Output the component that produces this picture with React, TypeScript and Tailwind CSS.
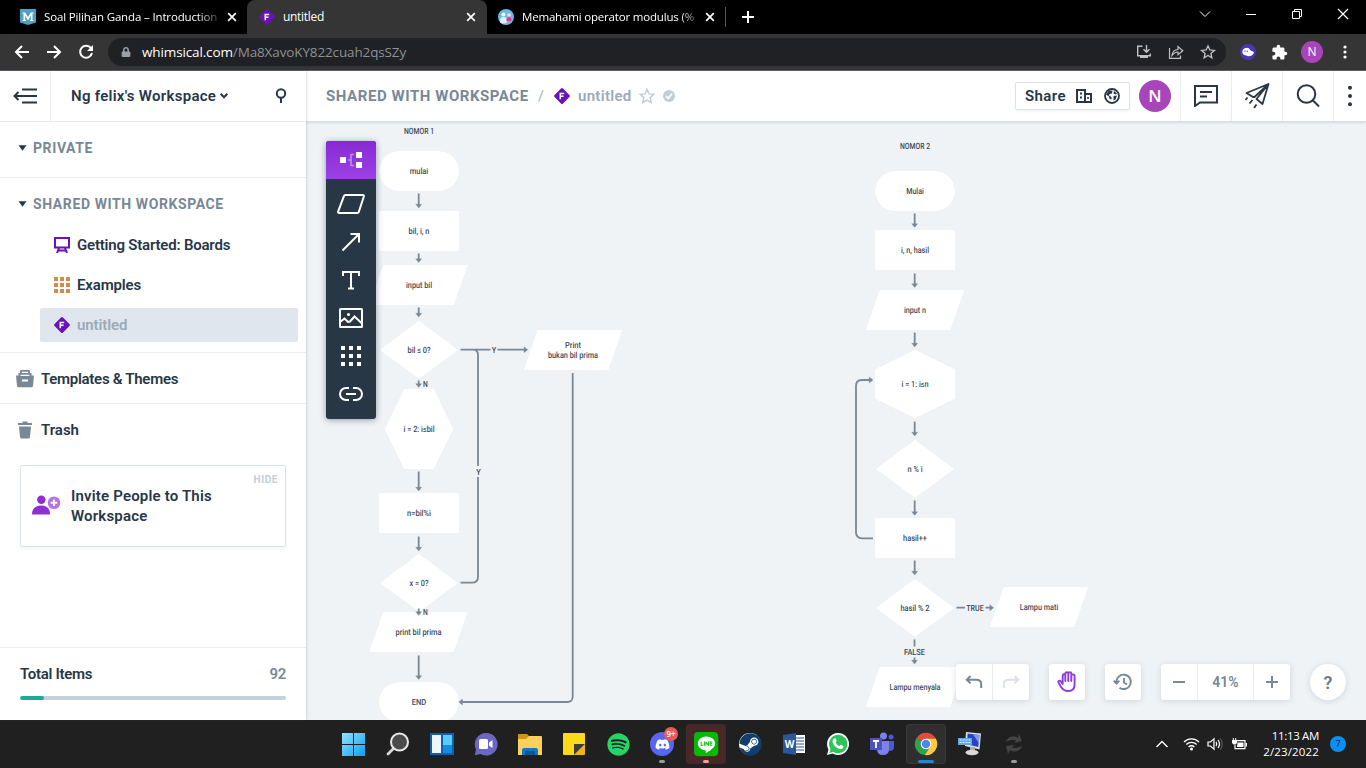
import React from "react";
import { FaSpotify, FaDiscord, FaSteam, FaLine, FaLock } from "react-icons/fa";
import { MdExtension } from "react-icons/md";

type IconProps = { className?: string; children: React.ReactNode; w?: number; h?: number };

/* Stroked drawing whose user units equal CSS pixels. */
const Ico = ({ className = "", children, w = 24, h = 24 }: IconProps) => (
  <svg
    width={w}
    height={h}
    viewBox={`0 0 ${w} ${h}`}
    fill="none"
    stroke="currentColor"
    strokeWidth={2}
    className={`block shrink-0 ${className}`}
  >
    {children}
  </svg>
);

const CloseX = () => (
  <Ico w={10} h={10} className="text-white">
    <path d="M1.2 1.2 8.8 8.8M8.8 1.2 1.2 8.8" strokeWidth={1.7} />
  </Ico>
);

const FlowMark = () => (
  <svg width={16} height={16} viewBox="0 0 16 16" className="block shrink-0">
    <path d="M7 .6a1.4 1.4 0 0 1 2 0L15.4 7a1.4 1.4 0 0 1 0 2L9 15.4a1.4 1.4 0 0 1-2 0L.6 9a1.4 1.4 0 0 1 0-2Z" fill="#6a11b8" />
    <path d="M6.3 11.3V5.4h3.9M6.3 8.3h3.2" stroke="#fff" strokeWidth={1.5} fill="none" />
  </svg>
);

const Avatar = ({ className }: { className: string }) => (
  <div className={`flex shrink-0 items-center justify-center rounded-full bg-[#a846b9] text-white ${className}`}>N</div>
);

function BrowserBar() {
  return (
    <div className="h-[71px] shrink-0 bg-black font-['Open_Sans',sans-serif] text-white">
      <div className="flex h-[34px] items-stretch text-[12px]">
        <div className="flex w-[247px] items-center rounded-br-lg bg-black pl-5">
          <svg width={16} height={16} viewBox="0 0 16 16" className="block shrink-0">
            <path d="M0 0h16v13.500L8 16l-8-2.500Z" fill="#4d9fc4" />
            <path d="M2.500 3.500h2.700L8 8.300l2.800-4.800h2.700v1h-1v6.500h1v1h-3.500v-1h.8V6.500L8.300 11h-.7L5.200 6.500V11H6v1H2.500v-1h1V4.500h-1Z" fill="#fff" />
          </svg>
          <div className="ml-2 w-[174px] shrink-0 whitespace-nowrap text-[11.5px] tracking-[-0.15px] [mask-image:linear-gradient(90deg,#000_88%,rgba(0,0,0,0.2))]">
            Soal Pilihan Ganda – Introduction
          </div>
          <div className="ml-[9px]">
            <CloseX />
          </div>
        </div>
        <div className="flex w-[240px] items-center rounded-t-lg bg-[#353535] pl-3">
          <FlowMark />
          <div className="ml-2 w-[183px] tracking-[-0.3px]">untitled</div>
          <CloseX />
        </div>
        <div className="flex w-[239px] items-center rounded-bl-lg bg-black pl-[11px]">
          <svg width={16} height={16} viewBox="0 0 16 16" className="block shrink-0">
            <circle cx={8} cy={8} r={8} fill="#6db9e4" />
            <path d="M2 13c0-4 1-5 3.500-5S9 9 9 13c-2 2-5 2-7 0Z" fill="#dff1fb" />
            <circle cx={5.500} cy={5.500} r={2} fill="#fff" />
            <circle cx={11} cy={6} r={1.800} fill="#fbd8c9" />
            <path d="M8.500 12c0-3 1-4 2.500-4s2.500 1 2.500 4Z" fill="#dc3b8c" />
          </svg>
          <div className="ml-2 w-[175px] shrink-0 whitespace-nowrap text-[11.5px] tracking-[-0.18px] [mask-image:linear-gradient(90deg,#000_90%,rgba(0,0,0,0.3))]">
            Memahami operator modulus (%
          </div>
          <div className="ml-2">
            <CloseX />
          </div>
          <div className="ml-[10px] h-5 w-px shrink-0 bg-[#555]" />
        </div>
        <div className="flex w-[43px] items-center justify-center">
          <Ico w={12} h={12}>
            <path d="M6 0v12M0 6h12" />
          </Ico>
        </div>
        <div className="ml-auto flex h-7 items-center">
          <Ico w={46} h={12}>
            <path d="M18 3.500l5 5 5-5" strokeWidth={1} />
          </Ico>
          <Ico w={46} h={12}>
            <path d="M18 6.500h10" strokeWidth={1} />
          </Ico>
          <Ico w={46} h={12}>
            <path d="M18.500 3.500h7v7h-7ZM20.500 3.500v-2h7v7h-2" strokeWidth={1} />
          </Ico>
          <Ico w={46} h={12}>
            <path d="M18 1l10 10M28 1 18 11" strokeWidth={1.200} />
          </Ico>
        </div>
      </div>
      <div className="flex h-[37px] items-center border-b border-[#5e5e60] bg-[#353535]">
        <div className="flex w-[108px] items-center gap-[16px] pl-[14px]">
          <Ico w={16} h={16}>
            <path d="M15 8H2M8 2 2 8l6 6" />
          </Ico>
          <Ico w={16} h={16}>
            <path d="M1 8h13M8 2l6 6-6 6" />
          </Ico>
          <Ico w={16} h={16}>
            <path d="M13 4.200A6 6 0 1 0 14 9" />
            <path d="M15 1v6H9Z" fill="currentColor" stroke="none" />
          </Ico>
        </div>
        <div className="flex h-7 w-[1118px] items-center rounded-full bg-[#202124] pl-[13px] pr-[10px] text-[13.5px]">
          <FaLock className="text-[#9aa0a6]" size={10} />
          <div className="ml-[11px] whitespace-nowrap tracking-[-0.13px]">
            whimsical.com<span className="text-[#8d9196]">/Ma8XavoKY822cuah2qsSZy</span>
          </div>
          <div className="ml-auto flex gap-4 text-[#bfc2c5]">
            <Ico w={16} h={16}>
              <path d="M6.500 2.200H1.700v9.500H14.300V9.500M10.500 1v7M7.500 5.200l3 3 3-3" strokeWidth={1.400} />
              <path d="M4 11.500h8v2.500H4Z" fill="currentColor" stroke="none" />
            </Ico>
            <Ico w={16} h={16}>
              <path d="M1.500 4v10.300h11V11.500M4 11.300c.5-4 3-5.700 6-5.800V2.500l4.800 4.200L10 10.800V8C7.500 8 5.500 9.300 4 11.300Z" strokeWidth={1.200} />
            </Ico>
            <Ico w={16} h={16}>
              <path d="m8 1.800 1.800 4.200 4.600.4-3.500 3 1 4.500L8 11.500l-3.900 2.400 1-4.500-3.500-3 4.600-.4Z" strokeWidth={1.300} />
            </Ico>
          </div>
        </div>
        <svg width={16} height={16} viewBox="0 0 16 16" className="ml-[14px] block">
          <circle cx={8} cy={8} r={8} fill="#4a35b5" />
          <path d="M2.300 8a4.300 4.300 0 0 1 8-2c.8 1.300 2.200 1 3.600 2-.4 3-2.700 4.300-5.700 4.300-1.600 0-1.500-1-2.900-1S2.300 9.500 2.300 8Z" fill="#fff" />
          <path d="M5 6.500v1.700M7.300 6.500v1.700" stroke="#555" strokeWidth={0.900} />
        </svg>
        <MdExtension className="ml-[15px]" size={17} />
        <Avatar className="ml-[13px] size-[22px] text-[12px]" />
        <svg width={16} height={16} viewBox="0 0 16 16" fill="#fff" className="ml-[14px] block">
          <circle cx={8} cy={3} r={1.600} />
          <circle cx={8} cy={8} r={1.600} />
          <circle cx={8} cy={13} r={1.600} />
        </svg>
      </div>
    </div>
  );
}

const Section = ({ label }: { label: string }) => (
  <div className="flex items-center gap-[6px] pl-[18px] text-[14px] font-bold leading-5 tracking-[0.6px] text-[#788896]">
    <svg width={9} height={6} viewBox="0 0 9 6" className="block">
      <path d="M.5.300h8L4.500 5.700Z" fill="#273746" />
    </svg>
    <span>{label}</span>
  </div>
);

function Sidebar() {
  return (
    <aside className="z-10 flex w-[306px] shrink-0 flex-col bg-white shadow-[0_0_3px_rgba(40,60,80,0.3)]">
      <div className="flex h-[51px] shrink-0 items-center border-b border-[#e4e9ee]">
        <div className="flex h-full w-[51px] items-center justify-center border-r border-[#e9edf1]">
          <Ico w={24} h={16}>
            <path d="M9 1.500h15M1.500 8H24M9 14.500h15M5.500 4 1.500 8l4 4" />
          </Ico>
        </div>
        <div className="ml-5 w-[145px] whitespace-nowrap text-[15px] font-semibold tracking-[0.28px]">Ng felix's Workspace</div>
        <Ico w={8} h={6} className="ml-[4px]">
          <path d="m.7.700 3.300 3.500L7.300.700" />
        </Ico>
        <Ico w={12} h={16} className="ml-[47px]">
          <circle cx={6} cy={5.500} r={4.200} />
          <path d="M6 10v5" />
        </Ico>
      </div>
      <div className="flex h-14 items-center border-b border-[#e9edf1] pb-1">
        <Section label="PRIVATE" />
      </div>
      <div className="h-[175px] border-b border-[#e9edf1] pt-4">
        <Section label="SHARED WITH WORKSPACE" />
        <div className="ml-10 mt-[14px] flex w-[258px] flex-col gap-[6px] text-[15px] font-semibold">
          <div className="flex h-[34px] items-center gap-[7px] pl-[14px]">
            <Ico w={16} h={16} className="text-[#6a11b8]">
              <path d="M1 1h14v9.500H1ZM5 11l-2 5M11 11l2 5M4 13.500h8" />
            </Ico>
            <span className="tracking-[-0.2px]">Getting Started: Boards</span>
          </div>
          <div className="flex h-[34px] items-center gap-[7px] pl-[14px]">
            <svg width={16} height={16} viewBox="0 0 16 16" fill="#d58a4c" className="block">
              <path d="M0 0h4v4H0ZM6 0h4v4H6ZM12 0h4v4h-4ZM0 6h4v4H0ZM6 6h4v4H6ZM12 6h4v4h-4ZM0 12h4v4H0ZM6 12h4v4H6ZM12 12h4v4h-4Z" />
            </svg>
            <span className="tracking-[-0.15px]">Examples</span>
          </div>
          <div className="flex h-[34px] items-center gap-[7px] rounded-[2px] bg-[#dfe6ee] pl-[14px] text-[#9caab7]">
            <FlowMark />
            <span className="tracking-[-0.1px]">untitled</span>
          </div>
        </div>
      </div>
      <div className="flex h-[51px] items-center gap-[7px] border-b border-[#e9edf1] pl-4 pt-0.5 text-[15px] font-semibold">
        <svg width={18} height={18} viewBox="0 0 18 18" fill="#788896" className="block">
          <path d="M5 0h8a1 1 0 0 1 1 1V3h1.500v2.500H18L17 16a1.500 1.500 0 0 1-1.500 1.300h-13A1.500 1.500 0 0 1 1 16L0 5.500h2.500V3H4V1a1 1 0 0 1 1-1Z" />
          <path d="M5.800 1.700h6.400v1.200H5.800ZM4.500 4.700h9v1.200h-9ZM6 9.500h6v2H6Z" fill="#fff" />
        </svg>
        <span className="tracking-[-0.28px]">Templates &amp; Themes</span>
      </div>
      <div className="flex h-[52px] items-center gap-[9px] pl-[18px] text-[15px] font-semibold">
        <svg width={14} height={18} viewBox="0 0 14 18" fill="#788896" className="block">
          <path d="M4.500.5h5V2H14v2H0V2h4.500ZM1 5.500h12L12 16a1.800 1.800 0 0 1-1.800 1.600H3.800A1.800 1.800 0 0 1 2 16Z" />
        </svg>
        <span>Trash</span>
      </div>
      <div className="mx-5 mt-[9px] flex h-[82px] items-start rounded-[2px] border border-[#dbe3ea] shadow-[0_2px_4px_rgba(40,60,80,0.06)]">
        <svg width={29} height={20} viewBox="0 0 29 20" className="ml-[11px] mt-[29px] block shrink-0">
          <circle cx={9.300} cy={4.800} r={4.200} fill="#8e2fd6" />
          <path d="M0 19.500c0-6 3.500-9 9.200-9s8.800 3 8.800 9Z" fill="#8e2fd6" />
          <circle cx={22} cy={7.800} r={6.300} fill="#b573e4" />
          <path d="M22 4.500v6.600M18.700 7.800h6.600" stroke="#fff" strokeWidth={2} />
        </svg>
        <div className="ml-[10px] mt-5 text-[15px] font-semibold leading-5 tracking-[0.18px]">
          Invite People to This
          <br />
          Workspace
        </div>
        <div className="ml-auto mr-[7px] mt-[7px] text-[10px] font-bold leading-[14px] tracking-[0.6px] text-[#c3cdd6]">HIDE</div>
      </div>
      <div className="mt-auto h-[73px] border-t border-[#e9edf1] px-5 pt-4">
        <div className="flex justify-between text-[15px] font-semibold leading-5">
          <span className="tracking-[-0.3px]">Total Items</span>
          <span className="tracking-[-0.3px] text-[#788896]">92</span>
        </div>
        <div className="mt-3 h-1 overflow-hidden rounded-full bg-[#c5d0da]">
          <div className="h-full w-6 rounded-full bg-[#1aac97]" />
        </div>
      </div>
    </aside>
  );
}

const HeadCell = ({ children, className = "w-[51px]" }: { children: React.ReactNode; className?: string }) => (
  <div className={`flex h-full items-center justify-center border-l border-[#e9edf1] ${className}`}>{children}</div>
);

function Header() {
  return (
    <header className="z-[5] flex h-[51px] shrink-0 items-center border-b border-[#d8dfe5] bg-white pl-5 text-[15px] font-semibold shadow-[0_1px_2px_rgba(40,60,80,0.12)]">
      <span className="w-[204px] whitespace-nowrap font-bold tracking-[0.56px] text-[#788896]">SHARED WITH WORKSPACE</span>
      <span className="w-6 pl-2 font-medium text-[#b3bec8]">/</span>
      <FlowMark />
      <span className="ml-2 w-[54px] tracking-[0.3px] text-[#9caab7]">untitled</span>
      <Ico w={16} h={16} className="ml-[7px] text-[#c3cdd6]">
        <path d="m8 1.500 2 4.400 4.800.5-3.600 3.200 1 4.800L8 12l-4.200 2.400 1-4.800L1.200 6.400 6 5.900Z" strokeWidth={1.500} />
      </Ico>
      <svg width={12} height={12} viewBox="0 0 12 12" className="ml-2 block">
        <circle cx={6} cy={6} r={6} fill="#c3cdd6" />
        <path d="m3 6.200 2.200 2.200L9 3.800" stroke="#fff" strokeWidth={1.700} fill="none" />
      </svg>
      <div className="ml-auto flex h-7 w-[115px] items-center rounded-[2px] border border-[#dbe3ea] pl-[9px] shadow-[0_2px_3px_rgba(40,60,80,0.05)]">
        <span className="w-[42px] tracking-[0.4px]">Share</span>
        <Ico w={16} h={14} className="ml-[9px]">
          <path d="M1 1h8v12H1ZM9 5h6v8H9" />
          <path d="M4 4.500h2M4 8.500h2M11.200 9h1.600" strokeWidth={2} />
        </Ico>
        <Ico w={16} h={16} className="ml-3">
          <circle cx={8} cy={8} r={7} strokeWidth={1.800} />
          <path d="M2 6.500 5 2.500l3.500.3L8 5.500 5.500 6 5 7.500 7.500 9v2.500L5.500 11 5 8.500ZM10 3l3 2.500-1.500 1-2-1ZM9.500 8l3.500-.5-1.500 4-2 1Z" fill="currentColor" stroke="none" />
        </Ico>
      </div>
      <Avatar className="ml-[9px] mr-[9px] size-8 font-['Open_Sans',sans-serif] text-[17px] font-semibold" />
      <HeadCell>
        <Ico w={24} h={22}>
          <path d="M1 1h22v16.500H6L1 21Z" />
          <path d="M6 7h12M6 11.500h7" />
        </Ico>
      </HeadCell>
      <HeadCell>
        <Ico w={26} h={26}>
          <path d="M24.500 1 2.500 10l6.500 4 1.500 0L24.500 1 12.500 16l6 5Z" strokeWidth={1.800} strokeLinejoin="round" />
          <path d="M3.500 14.500 1.500 17M8.500 17l-3 3.500M12.500 21.500l-2.500 3.500" strokeWidth={1.800} />
        </Ico>
      </HeadCell>
      <HeadCell>
        <Ico w={24} h={24}>
          <circle cx={10.500} cy={10} r={8.800} />
          <path d="m17 16.500 6 6" />
        </Ico>
      </HeadCell>
      <HeadCell className="w-[33px]">
        <svg width={6} height={22} viewBox="0 0 6 22" fill="#273746">
          <circle cx={3} cy={2.800} r={2} />
          <circle cx={3} cy={11} r={2} />
          <circle cx={3} cy={19.200} r={2} />
        </svg>
      </HeadCell>
    </header>
  );
}

type Label = [text: string, x: number, y: number, width: number];

const labels: Label[] = [
  ["NOMOR 1", 419, 131, 30],
  ["mulai", 419, 171, 18.5],
  ["bil, i, n", 419, 231, 21],
  ["input bil", 419, 285, 26],
  ["bil ≤ 0?", 419, 350, 23],
  ["Y", 494, 350, 4.5],
  ["N", 425.5, 384, 4.800],
  ["Print", 573, 345, 16],
  ["bukan bil prima", 573, 355, 50],
  ["i = 2: i≤bil", 419, 429, 31],
  ["Y", 478.500, 472, 4.500],
  ["n=bil%i", 419, 513, 24],
  ["x = 0?", 419, 583, 19],
  ["N", 425.500, 612, 4.800],
  ["print bil prima", 418.500, 632, 46],
  ["END", 419, 702, 14.500],
  ["NOMOR 2", 915, 146, 30],
  ["Mulai", 915, 191, 17.500],
  ["i, n, hasil", 915, 250, 28],
  ["input n", 915, 310, 22],
  ["i = 1: i≤n", 915, 384, 27],
  ["n % i", 915, 469, 15],
  ["hasil++", 915, 538, 24],
  ["hasil % 2", 915, 608, 29],
  ["TRUE", 975, 608, 17.500],
  ["Lampu mati", 1039, 607, 38.500],
  ["FALSE", 914.500, 652, 21],
  ["Lampu menyala", 915, 687, 51],
];

const downArrows: [x: number, from: number, to: number][] = [
  [418.700, 193.500, 208], [418.700, 253.500, 262.500], [418.700, 307.500, 317], [418.700, 380.500, 387.500],
  [418.700, 471.500, 491], [418.700, 536.500, 551], [418.700, 608.500, 615.500], [418.700, 655.500, 679.500],
  [914.700, 213.500, 227.500], [914.700, 273.500, 287.500], [914.700, 332.500, 347], [914.700, 421.500, 436],
  [914.700, 500.500, 515.500], [914.700, 560.500, 575], [914.500, 657.500, 664],
];

const para = (x: number, y: number) => `M${x + 14} ${y}h85l-14 40h-85Z`;
const diamond = (x: number, y: number) => `M${x} ${y - 29.500}l39.500 29.500-39.500 29-39.500-29Z`;

function Diagram() {
  return (
    <svg width={1059} height={598} viewBox="307 122 1059 598" className="block">
      <g fill="#fff" style={{ filter: "drop-shadow(0 0 0.7px rgba(40,60,80,.12))" }}>
        <rect x={379} y={151} width={80} height={40} rx={20} />
        <rect x={379} y={211} width={80} height={40} rx={1} />
        <path d={para(369, 265)} />
        <path d={diamond(419, 350)} />
        <path d={para(523.500, 330)} />
        <path d="M404 389h30l19.500 40-19.500 40h-30l-19.500-40Z" />
        <rect x={379} y={493} width={80} height={40} rx={1} />
        <path d={diamond(419, 583)} />
        <path d={para(369, 612)} />
        <rect x={379} y={682} width={80} height={40} rx={20} />
        <rect x={875} y={171} width={80} height={40} rx={20} />
        <rect x={875} y={230} width={80} height={40} rx={1} />
        <path d={para(865.500, 290)} />
        <path d="M915 349.500l40 19.500v30l-40 19.500-40-19.500v-30Z" />
        <path d={diamond(915, 469)} />
        <rect x={875} y={518} width={80} height={40} rx={1} />
        <path d={diamond(915, 608)} />
        <path d={para(989.500, 587)} />
        <path d={para(865.500, 667)} />
      </g>
      <g stroke="#788896" strokeWidth={1.800} fill="none">
        {downArrows.map(([x, a, b]) => (
          <g key={`${x}-${a}`}>
            <path d={`M${x} ${a}V${b - 1.500}`} />
            <path d={`M${x - 3} ${b - 3.800}h6L${x} ${b}Z`} fill="#788896" strokeWidth={0.300} />
          </g>
        ))}
        <path d="M460.500 349.700H490.500M497.500 349.700h28M478 466V355q0-5-5-5.300M478 477v99.700q0 6-6 6h-11.500" />
        <path d="M572.700 373v323.500q0 5.500-5.500 5.500H461M873 538.300h-11q-6 0-6-6V386q0-6 6-6h9M956.500 607.700h8.500M985.500 607.700h7M914.500 639.500v7" />
        <g fill="#788896" strokeWidth={0.300}>
          <path d="M524 346.700v6l3.800-3ZM462.500 699v6l-3.800-3ZM869.200 377v6l3.800-3ZM989.800 604.700v6l3.800-3Z" />
        </g>
      </g>
      <g className="font-['Roboto',sans-serif] text-[8.6px] font-medium" fill="#3c4a57" textAnchor="middle" textRendering="geometricPrecision">
        {labels.map(([t, x, y, w]) => (
          <text key={`${t}-${x}-${y}`} x={x} y={y + 2.800} textLength={w} lengthAdjust="spacingAndGlyphs">
            {t}
          </text>
        ))}
      </g>
    </svg>
  );
}

const Tool = ({ children }: { children: React.ReactNode }) => (
  <div className="flex h-[38px] items-center justify-center">{children}</div>
);

function ToolPalette() {
  return (
    <div className="absolute left-5 top-[19px] w-[50px] overflow-hidden rounded-[3px] bg-[#273746] pb-[6px] text-white shadow-[0_1px_6px_rgba(30,45,60,0.45)]">
      <div className="mb-[6px] flex h-[38px] items-center justify-center bg-linear-to-b from-[#8729d3] to-[#9c41e5]">
        <svg width={24} height={18} viewBox="0 0 24 18" className="block">
          <path d="M1 6h6v6H1ZM17 1h6v6h-6ZM17 11h6v6h-6Z" fill="#fff" />
          <path d="M9 9h3M15 3.500h-3v11h3" stroke="#c18bee" strokeWidth={1.600} fill="none" />
        </svg>
      </div>
      <Tool>
        <Ico w={28} h={22}>
          <path d="M8.500 2H26a1 1 0 0 1 .9 1.200l-5.200 16a1.300 1.300 0 0 1-1.200.8H2a1 1 0 0 1-.9-1.300l5.800-15.600A1.600 1.600 0 0 1 8.500 2Z" />
        </Ico>
      </Tool>
      <Tool>
        <Ico w={20} h={20}>
          <path d="M1.500 18.500 18 2M9.500 2H18v8.500" />
        </Ico>
      </Tool>
      <Tool>
        <Ico w={20} h={20}>
          <path d="M2 6V2h16v4M10 2v16.500M7 18.500h6" />
        </Ico>
      </Tool>
      <Tool>
        <Ico w={24} h={20}>
          <rect x={1} y={1} width={22} height={18} rx={0.5} />
          <path d="m1 14 4.500-3.500 3.500 3.500 2-.5 4.500-5L23 15.500" />
          <circle cx={9.500} cy={6.500} r={1.500} fill="currentColor" stroke="none" />
        </Ico>
      </Tool>
      <Tool>
        <svg width={20} height={20} viewBox="0 0 20 20" fill="#fff">
          <path d="M0 0h4v4H0ZM8 0h4v4H8ZM16 0h4v4h-4ZM0 8h4v4H0ZM8 8h4v4H8ZM16 8h4v4h-4ZM0 16h4v4H0ZM8 16h4v4H8ZM16 16h4v4h-4Z" />
        </svg>
      </Tool>
      <Tool>
        <Ico w={24} h={14}>
          <path d="M10 1H7a6 6 0 0 0 0 12h3M14 1h3a6 6 0 0 1 0 12h-3M7 7h10" />
        </Ico>
      </Tool>
    </div>
  );
}

const controlBox = "flex h-9 items-center rounded-[3px] bg-white shadow-[0_1px_6px_rgba(40,60,80,0.16)]";

function Controls() {
  return (
    <div className="absolute bottom-5 right-5 flex gap-5 text-[#788896]">
      <div className={controlBox}>
        <div className="flex h-full w-[37px] items-center justify-center border-r border-[#e9edf1]">
          <Ico w={18} h={14}>
            <path d="M5.500 1 1.800 4.700l3.700 3.700M2 4.700h9.500q4.700 0 4.700 4.500V13" />
          </Ico>
        </div>
        <div className="flex h-full w-9 items-center justify-center text-[#dce1e6]">
          <Ico w={18} h={14}>
            <path d="m12.500 1 3.700 3.700-3.700 3.700M16 4.700H6.500Q1.800 4.700 1.800 9.200V13" />
          </Ico>
        </div>
      </div>
      <div className={`${controlBox} w-9 justify-center text-[#8e3bd8]`}>
        <Ico w={20} h={22}>
          <path
            d="M5.700 12V4.500a1.300 1.300 0 0 1 2.600 0V10 2.800a1.500 1.500 0 0 1 3 0V10 2.800a1.500 1.500 0 0 1 3 0V10 5a1.500 1.500 0 0 1 3.300 0v8.500c0 4.500-2.500 6.500-6.500 6.500-3.500 0-5.300-1.300-7-4L1.500 11.500C1 10 2.500 9 3.700 10.200L5.700 13Z"
            strokeWidth={1.900}
            strokeLinejoin="round"
          />
        </Ico>
      </div>
      <div className={`${controlBox} w-9 justify-center`}>
        <Ico w={20} h={18}>
          <path d="M3.500 9.500A7.200 7.200 0 1 1 6.500 14.700M.7 7.700 3.500 10.700l2.800-3M11 5v4.500l3 2" strokeWidth={1.900} />
        </Ico>
      </div>
      <div className={`${controlBox} w-[129px]`}>
        <div className="flex w-9 justify-center">
          <Ico w={12} h={12}>
            <path d="M0 6h12" />
          </Ico>
        </div>
        <div className="flex h-full w-[57px] items-center justify-center border-x border-[#e9edf1] text-[14px] font-semibold">41%</div>
        <div className="flex w-9 justify-center">
          <Ico w={12} h={12}>
            <path d="M0 6h12M6 0v12" />
          </Ico>
        </div>
      </div>
      <div className="flex size-9 items-center justify-center rounded-full bg-white text-[18px] font-semibold text-[#6b7b89] shadow-[0_1px_6px_rgba(40,60,80,0.16)]">?</div>
    </div>
  );
}

const TaskSlot = ({ children, className = "", mark }: { children: React.ReactNode; className?: string; mark?: string }) => (
  <div className={`relative flex size-10 items-center justify-center rounded-[4px] ${className}`}>
    {children}
    {mark && <span className={`absolute bottom-px h-[3px] rounded-full ${mark}`} />}
  </div>
);

const Art = ({ children }: { children: React.ReactNode }) => (
  <svg width={24} height={24} viewBox="0 0 24 24" className="block">
    {children}
  </svg>
);

function Taskbar() {
  return (
    <footer className="relative flex h-12 shrink-0 items-center bg-[#202020] font-['Open_Sans',sans-serif] text-white">
      <div className="ml-[334px] flex gap-1">
        <TaskSlot>
          <Art>
            <defs>
              <linearGradient id="win" x1="0" y1="0" x2="1" y2="1">
                <stop offset="0" stopColor="#8fe5ff" />
                <stop offset="1" stopColor="#119df0" />
              </linearGradient>
            </defs>
            <path d="M0 1h11v11H0ZM12 1h11v11H12ZM0 13h11v11H0ZM12 13h11v11H12Z" fill="url(#win)" />
          </Art>
        </TaskSlot>
        <TaskSlot>
          <Art>
            <path d="m2 22 6.500-6.500" stroke="#d8d8d8" strokeWidth={2.800} strokeLinecap="round" />
            <circle cx={13.500} cy={10} r={8.500} fill="#4b4b4b" stroke="#e8e8e8" strokeWidth={2} />
          </Art>
        </TaskSlot>
        <TaskSlot>
          <Art>
            <path d="M0 1h24v22H0Z" fill="#0d62ad" />
            <path d="M2 3h9v18H2Z" fill="#f1f6fb" />
            <path d="M13 3h9v10h-9Z" fill="#59ccfa" />
            <path d="M13 13h9v8h-9Z" fill="#168ce0" />
          </Art>
        </TaskSlot>
        <TaskSlot>
          <Art>
            <path d="M12 1a11.300 11.300 0 1 1-5.500 21L.8 23.300 2 17.500A11.300 11.300 0 0 1 12 1Z" fill="#6c66c4" />
            <rect x={5} y={7} width={9} height={10} rx={1.500} fill="#fff" />
            <path d="m15 10.500 3.500-2.500v8L15 13.500Z" fill="#fff" />
          </Art>
        </TaskSlot>
        <TaskSlot>
          <Art>
            <path d="M0 3q0-1 1-1h8l3 3v4H0Z" fill="#d39319" />
            <path d="M0 7h8l3-3h12q1 0 1 1v18H0Z" fill="#fcd05b" />
            <path d="M4 23v-5q0-2 2-2h12q2 0 2 2v5Z" fill="#1276c4" />
            <path d="M7 19h10v4H7Z" fill="#0a5796" />
          </Art>
        </TaskSlot>
        <TaskSlot>
          <Art>
            <path d="M2 1h20q1 0 1 1v10L12 23H2q-1 0-1-1V2q0-1 1-1Z" fill="#fdd91a" />
            <path d="M12 12h11L12 23Z" fill="#3c3c3c" />
            <path d="M23 12v10q0 1-1 1H12Z" fill="#efb321" />
          </Art>
        </TaskSlot>
        <TaskSlot>
          <FaSpotify size={23} className="text-[#25d366]" />
        </TaskSlot>
        <TaskSlot mark="w-[6px] bg-[#9a9a9a]">
          <div className="flex size-6 items-center justify-center rounded-full bg-[#5865f2]">
            <FaDiscord size={15} />
          </div>
          <span className="absolute left-[22px] top-[3px] flex size-[14px] items-center justify-center rounded-full bg-[#e85959] text-[8px] font-semibold">9+</span>
        </TaskSlot>
        <TaskSlot className="bg-[#492627]" mark="w-[6px] bg-[#ff99a0]">
          <div className="flex size-6 items-center justify-center rounded-[4px] bg-[radial-gradient(circle,#fff_60%,#06b806_62%)]">
            <FaLine size={27} className="shrink-0 text-[#06b806]" />
          </div>
        </TaskSlot>
        <TaskSlot>
          <div className="flex size-[22px] items-center justify-center rounded-full bg-white">
            <FaSteam size={23} className="shrink-0 text-[#103e6d]" />
          </div>
        </TaskSlot>
        <TaskSlot>
          <Art>
            <path d="M12 3h11v18H12Z" fill="#fff" />
            <path d="M14 6h8M14 9h8M14 12h8M14 15h8M14 18h8" stroke="#2b579a" />
            <path d="M1 3 14 1v22L1 21Z" fill="#2b579a" />
            <text x={7.500} y={16} textAnchor="middle" fill="#fff" fontSize={10} fontWeight={700}>W</text>
          </Art>
        </TaskSlot>
        <TaskSlot>
          <Art>
            <path d="M12 1a11 11 0 1 1-5.500 20.500L1 23l1.500-5.500A11 11 0 0 1 12 1Z" fill="#fff" />
            <path d="M12 2.700a9.300 9.300 0 1 1-4.700 17.300l-4 1 1.200-4A9.300 9.300 0 0 1 12 2.700Z" fill="#2fc45a" />
            <path d="M8 6.500c1-.7 1.800-.3 2 .6l.7 1.700-1 1.600c.8 1.800 2 3 3.800 3.700l1.400-1.400 2.400 1.200c.7.500-.2 2.400-1.500 3-4.500 1.500-10.500-5-9-8.800.2-.700.5-1.200 1.200-1.600Z" fill="#fff" />
          </Art>
        </TaskSlot>
        <TaskSlot>
          <Art>
            <circle cx={13.500} cy={4} r={3.500} fill="#7b83eb" />
            <circle cx={21} cy={5} r={2.500} fill="#5059c9" />
            <path d="M17 9h7v6q0 4-4 4h-3Z" fill="#5059c9" />
            <path d="M7 9h12v8q0 6-6 6t-6-6Z" fill="#7b83eb" />
            <path d="M0 6h12v12H0Z" fill="#4b53bc" />
            <path d="M3 9h6M6 9v7" stroke="#fff" strokeWidth={1.800} />
          </Art>
        </TaskSlot>
        <TaskSlot className="bg-[#2f2f2f] ring-1 ring-inset ring-[#383838]" mark="w-4 bg-[#1d87dd]">
          <Art>
            <path d="M12 12 2.300 6.500A11.200 11.200 0 0 1 21.800 6.500H12Z" fill="#e24a3b" />
            <path d="M12 12 2.300 6.300A11.200 11.200 0 0 0 10.800 23.100L16 14.500Z" fill="#2da24e" />
            <path d="M12 6.500h9.800A11.200 11.200 0 0 1 10.800 23.100L16.500 14Z" fill="#fcca3f" />
            <circle cx={12} cy={12} r={5.300} fill="#fff" />
            <circle cx={12} cy={12} r={4.200} fill="#4b87ee" />
          </Art>
        </TaskSlot>
        <TaskSlot>
          <Art>
            <path d="M8 0l15 1.500-1.500 16L7 14Z" fill="#dbe1e8" />
            <path d="M9.500 1.500 21.500 3l-1.200 12-11-2.500Z" fill="#2742c2" />
            <path d="M15 2.200 21.500 3l-.8 8Z" fill="#7f96ea" />
            <path d="M0 6h14v7H0Z" fill="#5aa8e8" />
            <path d="M1.500 8h11M1.500 10.500h11" stroke="#e5f3ff" strokeDasharray="2 1" />
            <path d="M12 15h5v5h-5Z" fill="#aaa" />
            <ellipse cx={14} cy={20.500} rx={6.500} ry={2.800} fill="#d9d9d9" />
          </Art>
        </TaskSlot>
        <TaskSlot mark="w-[6px] bg-[#9a9a9a]">
          <Art>
            <path d="M4 10c1-5 8-7 12-4l1-4 3 7-8 2 2-2.500c-3-1-6-.5-10 1.500ZM20 14c-1 5-8 7-12 4l-2 4-2-8 8-1-2 2.500c3 1 6 .5 10-1.500Z" fill="#444" />
          </Art>
        </TaskSlot>
      </div>
      <div className="ml-auto flex items-center pr-5">
        <Ico w={14} h={8}>
          <path d="m1.500 7 5.500-5.500L12.500 7" strokeWidth={1.400} />
        </Ico>
        <Ico w={17} h={14} className="ml-[14px]">
          <path d="M1 5a10.500 10.500 0 0 1 15 0M3.300 7.500a7.300 7.300 0 0 1 10.400 0M5.600 10a4 4 0 0 1 5.800 0" strokeWidth={1.300} />
          <circle cx={8.500} cy={12} r={1.500} fill="currentColor" stroke="none" />
        </Ico>
        <Ico w={17} h={14} className="ml-[7px]">
          <path d="M1 5h2.500L7 1.800v10.400L3.500 9H1ZM9 4.800q1.500 2.200 0 4.400M11 3q3 4 0 8" strokeWidth={1.200} />
          <path d="M13.200 1.500q3.800 5.500 0 11" strokeWidth={1.200} stroke="#5c5c5c" />
        </Ico>
        <Ico w={17} h={14} className="ml-[7px]">
          <path d="M6 3.700h8v8H4V8" strokeWidth={1.200} />
          <path d="M6.500 5.500H12.500v4.500H6ZM14.500 6H16v3.500h-1.500ZM1 3h5v3L4.500 7.500h-2L1 6ZM1.800 1h1v2h-1ZM4.200 1h1v2h-1Z" fill="currentColor" stroke="none" />
        </Ico>
        <div className="ml-[11px] w-[60px] whitespace-nowrap text-right text-[11.5px] leading-4">
          <div className="tracking-[-0.35px]">11:13 AM</div>
          <div className="-ml-2 tracking-[0.15px]">2/23/2022</div>
        </div>
        <div className="ml-[11px] flex size-4 items-center justify-center rounded-full bg-[#0a90f5] text-[9px] text-[#06233c]">7</div>
      </div>
    </footer>
  );
}

export default function App() {
  return (
    <div className="flex h-[768px] w-[1366px] flex-col overflow-hidden">
      <BrowserBar />
      <div className="flex h-[649px] shrink-0 font-['Roboto',sans-serif] text-[#273746]">
        <Sidebar />
        <main className="flex min-w-0 flex-1 flex-col bg-[#eff3f6]">
          <Header />
          <div className="relative h-[598px] overflow-hidden pl-px">
            <Diagram />
            <ToolPalette />
            <Controls />
          </div>
        </main>
      </div>
      <Taskbar />
    </div>
  );
}
